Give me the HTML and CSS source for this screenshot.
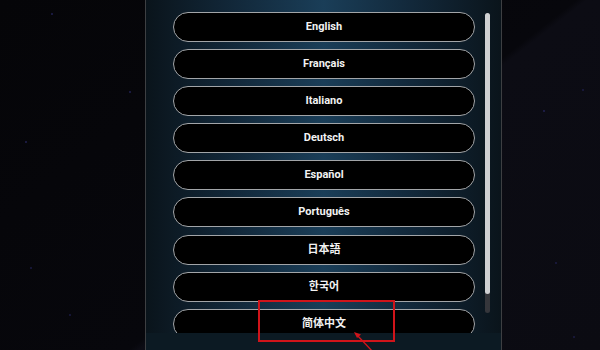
FILE: index.html
```html
<!DOCTYPE html>
<html lang="en">

<head>
    <meta charset="UTF-8">
    <meta name="viewport" content="width=device-width, initial-scale=1.0">
    <title>Language</title>
    <link rel="stylesheet" href="styles.css">
</head>

<body>
    <div class="panel">
        <div class="viewport">
            <div class="list">
                <div class="lang">English</div>
                <div class="lang">Français</div>
                <div class="lang">Italiano</div>
                <div class="lang">Deutsch</div>
                <div class="lang">Español</div>
                <div class="lang">Português</div>
                <div class="lang">日本語</div>
                <div class="lang">한국어</div>
                <div class="lang">简体中文</div>
            </div>
            <div class="scrollbar">
                <div class="thumb"></div>
            </div>
        </div>
        <div class="footer"></div>
    </div>

    <!-- 标注 -->
    <div class="mark"></div>
    <svg class="arrow" width="40" height="30" viewBox="0 0 40 30">
        <line x1="4" y1="3" x2="22" y2="22" stroke="#d0141a" stroke-width="1.3" />
        <polygon points="2,1 9,3.5 5,7" fill="#d0141a" />
    </svg>
</body>

</html>
```

FILE: styles.css
```css
body {
    margin: 0;
    width: 600px;
    height: 350px;
    overflow: hidden;
    font-family: Roboto, "Liberation Sans", "Noto Sans CJK SC", "Noto Sans CJK KR", sans-serif;
    background-color: #050509;
    background-image:
        radial-gradient(circle at 52px 14px, #2a2a6e 0, transparent 1.5px),
        radial-gradient(circle at 130px 92px, #2a2a6e 0, transparent 1.5px),
        radial-gradient(circle at 26px 142px, #2a2a6e 0, transparent 1.5px),
        radial-gradient(circle at 31px 268px, #22225a 0, transparent 1.5px),
        radial-gradient(circle at 70px 315px, #22225a 0, transparent 1.5px),
        radial-gradient(circle at 583px 90px, #22225a 0, transparent 1.5px),
        radial-gradient(circle at 544px 111px, #2a2a6e 0, transparent 1.5px),
        radial-gradient(circle at 556px 263px, #22225a 0, transparent 1.5px),
        radial-gradient(circle at 574px 337px, #22225a 0, transparent 1.5px),
        linear-gradient(142deg, #050508 0, #07070c 55%, #0c0c14 56%, #0b0b12 100%);
}

.panel {
    position: relative;
    margin-left: 145px;
    width: 355px;
    height: 350px;
    border-left: 1px solid #3d3f42;
    border-right: 1px solid #3d3f42;
    background: linear-gradient(to right, #0a141b 0, #12283a 25%, #1a3e58 50%, #12283a 75%, #0a141b 100%);
}

.viewport {
    display: flex;
    height: 333px;
    overflow: hidden;
}

.list {
    display: flex;
    flex-direction: column;
    gap: 7.1px;
    width: 302px;
    padding-top: 12px;
    padding-left: 27px;
}

.lang {
    flex: none;
    box-sizing: border-box;
    height: 30px;
    line-height: 28.5px;
    border: 1.5px solid #a2a5a8;
    border-radius: 15px;
    background: #000;
    color: #f2f2f2;
    text-align: center;
    font-size: 11px;
    font-weight: 700;
}

.scrollbar {
    width: 5px;
    height: 300px;
    margin-top: 13px;
    margin-left: 10px;
    border-radius: 3px;
    background: #35363b;
}

.thumb {
    height: 281px;
    border-radius: 3px;
    background: #cfd0d2;
}

.footer {
    height: 17px;
    background: #0c1a23;
}

.mark {
    position: absolute;
    left: 258px;
    top: 300px;
    width: 133px;
    height: 38px;
    border: 2px solid #d0141a;
}

.arrow {
    position: absolute;
    left: 352px;
    top: 331px;
}
```
